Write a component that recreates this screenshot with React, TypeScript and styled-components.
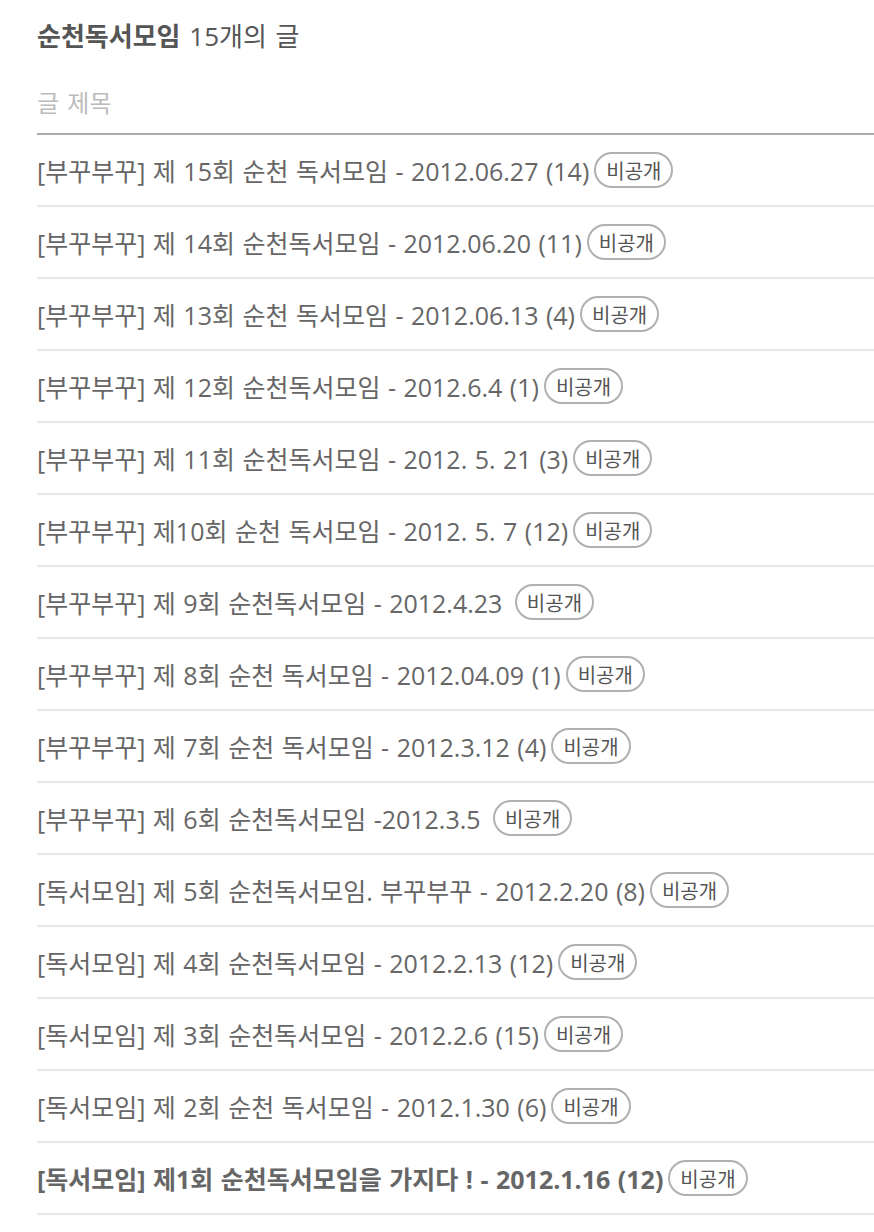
import styled, { createGlobalStyle } from "styled-components";

type Post = { title: string; bold?: boolean };

const posts: Post[] = [
  { title: "[부꾸부꾸] 제 15회 순천 독서모임 - 2012.06.27 (14)" },
  { title: "[부꾸부꾸] 제 14회 순천독서모임 - 2012.06.20 (11)" },
  { title: "[부꾸부꾸] 제 13회 순천 독서모임 - 2012.06.13 (4)" },
  { title: "[부꾸부꾸] 제 12회 순천독서모임 - 2012.6.4 (1)" },
  { title: "[부꾸부꾸] 제 11회 순천독서모임 - 2012. 5. 21 (3)" },
  { title: "[부꾸부꾸] 제10회 순천 독서모임 - 2012. 5. 7 (12)" },
  { title: "[부꾸부꾸] 제 9회 순천독서모임 - 2012.4.23\u00a0" },
  { title: "[부꾸부꾸] 제 8회 순천 독서모임 - 2012.04.09 (1)" },
  { title: "[부꾸부꾸] 제 7회 순천 독서모임 - 2012.3.12 (4)" },
  { title: "[부꾸부꾸] 제 6회 순천독서모임 -2012.3.5\u00a0" },
  { title: "[독서모임] 제 5회 순천독서모임. 부꾸부꾸 - 2012.2.20 (8)" },
  { title: "[독서모임] 제 4회 순천독서모임 - 2012.2.13 (12)" },
  { title: "[독서모임] 제 3회 순천독서모임 - 2012.2.6 (15)" },
  { title: "[독서모임] 제 2회 순천 독서모임 - 2012.1.30 (6)" },
  { title: "[독서모임] 제1회 순천독서모임을 가지다 ! - 2012.1.16 (12)", bold: true },
];

const GlobalStyle = createGlobalStyle`
  body {
    margin: 0;
    background: #fff;
    font-family: "Open Sans", "Noto Sans CJK KR", sans-serif;
  }
`;

const Page = styled.div`
  padding: 18px 0 0 37px;
`;

const Heading = styled.h2`
  margin: 0;
  font-size: 26px;
  line-height: 36px;
  font-weight: 400;
  word-spacing: 2px;
  color: #555;

  strong {
    font-weight: 700;
  }
`;

const ColumnHead = styled.div`
  margin-top: 31px;
  padding-bottom: 12px;
  line-height: 36px;
  font-size: 24px;
  word-spacing: 2px;
  color: #bbb;
  border-bottom: 2px solid #aaa;
`;

const List = styled.ul`
  list-style: none;
  margin: 0;
  padding: 0;
`;

const Row = styled.li<{ $bold?: boolean }>`
  display: flex;
  align-items: center;
  height: 70px;
  border-bottom: 2px solid #e8e8e8;
  font-size: 25px;
  word-spacing: 1px;
  color: #666;
  font-weight: ${({ $bold }) => ($bold ? 700 : 400)};
  white-space: pre;
`;

const Badge = styled.span`
  display: inline-flex;
  align-items: center;
  height: 32px;
  margin-left: 5px;
  padding: 0 10px;
  border: 2px solid #b0b0b0;
  border-radius: 18px;
  font-size: 20px;
  font-weight: 400;
  word-spacing: 0;
  color: #555;
`;

export default function App() {
  return (
    <>
      <GlobalStyle />
      <Page>
        <Heading>
          <strong>순천독서모임</strong> 15개의 글
        </Heading>
        <ColumnHead>글 제목</ColumnHead>
        <List>
          {posts.map(({ title, bold }) => (
            <Row key={title} $bold={bold}>
              {title}
              <Badge>비공개</Badge>
            </Row>
          ))}
        </List>
      </Page>
    </>
  );
}
